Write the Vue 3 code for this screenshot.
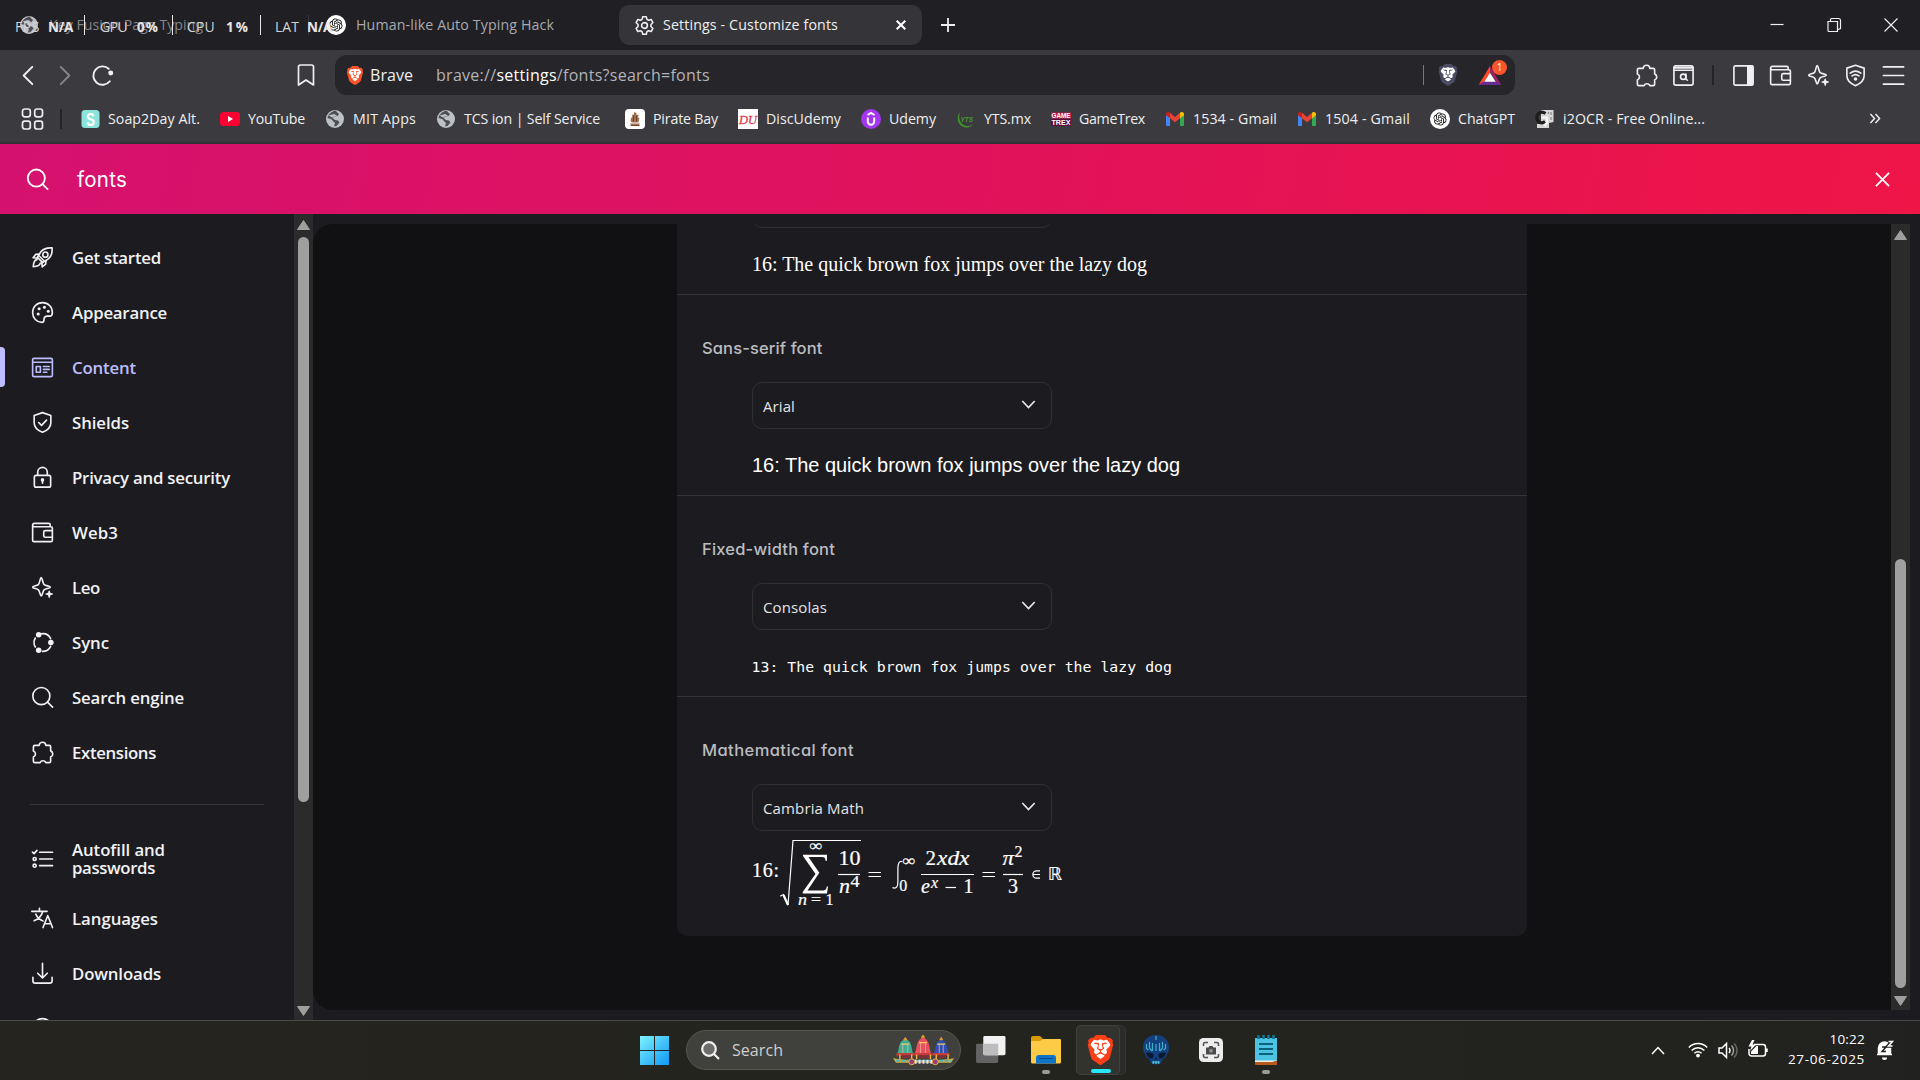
<script setup>
// Spreads a label's letters so that it fills the given width in pixels.
const vFit = {
  mounted(el, { value }) {
    const range = document.createRange()
    range.selectNodeContents(el)
    const width = range.getBoundingClientRect().width
    el.style.letterSpacing = `${(value - width) / el.textContent.trim().length}px`
  }
}

const shieldShape = 'M15.68 0l2.096 2.38s1.84-.512 2.709.358c.868.87 1.584 1.638 1.584 1.638l-.562 1.381.715 2.047s-2.104 7.98-2.35 8.955c-.486 1.919-.818 2.66-2.198 3.633-1.38.972-3.884 2.66-4.293 2.916-.409.256-.92.692-1.38.692-.46 0-.97-.436-1.38-.692a185.796 185.796 0 01-4.293-2.916c-1.38-.973-1.712-1.714-2.197-3.633-.247-.975-2.351-8.955-2.351-8.955l.715-2.047-.562-1.381s.716-.768 1.585-1.638c.868-.87 2.708-.358 2.708-.358L8.321 0h7.36z'
const lionFace = 'M12.001 14.936c-.14 0-1.038.317-1.758.69-.72.373-1.242.637-1.409.742-.167.104-.065.301.087.409.152.107 2.194 1.69 2.393 1.866.198.175.489.464.687.464.198 0 .49-.29.688-.464.198-.175 2.24-1.759 2.392-1.866.152-.108.254-.305.087-.41-.167-.104-.689-.368-1.41-.741-.72-.373-1.617-.69-1.757-.69zm0-11.278s-.409.001-1.022.206-1.278.46-1.584.46c-.307 0-2.581-.434-2.581-.434S4.119 7.152 4.119 7.849c0 .697.339.881.68 1.243l2.02 2.149c.192.203.59.511.356 1.066-.235.555-.58 1.26-.196 1.977.384.716 1.042 1.194 1.464 1.115.421-.08 1.412-.598 1.776-.834.364-.237 1.518-1.19 1.518-1.554 0-.365-1.193-1.02-1.413-1.168-.22-.15-1.226-.725-1.247-.95-.02-.227-.012-.293.284-.851.297-.559.831-1.304.742-1.8-.089-.495-.95-.753-1.565-.986-.615-.232-1.799-.671-1.947-.74-.148-.068-.11-.133.339-.175.448-.043 1.719-.212 2.292-.052.573.16 1.552.403 1.632.532.079.13.149.134.067.579-.081.445-.5 2.581-.541 2.96-.04.38-.12.63.288.724.409.094 1.097.256 1.333.256s.924-.162 1.333-.256c.408-.093.329-.344.288-.723-.04-.38-.46-2.516-.541-2.961-.082-.445-.012-.45.067-.579.08-.129 1.059-.372 1.632-.532.573-.16 1.845.009 2.292.052.449.042.487.107.339.175-.148.069-1.332.508-1.947.74-.615.233-1.476.49-1.565.986-.09.496.445 1.241.742 1.8.297.558.304.624.284.85-.02.226-1.026.802-1.247.95-.22.15-1.413.804-1.413 1.169 0 .364 1.154 1.317 1.518 1.554.364.236 1.355.755 1.776.834.422.079 1.08-.4 1.464-1.115.384-.716.039-1.422-.195-1.977-.235-.555.163-.863.355-1.066l2.02-2.149c.341-.362.68-.546.68-1.243 0-.697-2.695-3.96-2.695-3.96s-2.274.436-2.58.436c-.307 0-.972-.256-1.585-.461-.613-.205-1.022-.206-1.022-.206z'
const knot = 'M22.2819 9.8211a5.9847 5.9847 0 0 0-.5157-4.9108 6.0462 6.0462 0 0 0-6.5098-2.9A6.0651 6.0651 0 0 0 4.9807 4.1818a5.9847 5.9847 0 0 0-3.9977 2.9 6.0462 6.0462 0 0 0 .7427 7.0966 5.98 5.98 0 0 0 .511 4.9107 6.051 6.051 0 0 0 6.5146 2.9001A5.9847 5.9847 0 0 0 13.2599 24a6.0557 6.0557 0 0 0 5.7718-4.2058 5.9894 5.9894 0 0 0 3.9977-2.9001 6.0557 6.0557 0 0 0-.7475-7.0729zm-9.022 12.6081a4.4755 4.4755 0 0 1-2.8764-1.0408l.1419-.0804 4.7783-2.7582a.7948.7948 0 0 0 .3927-.6813v-6.7369l2.02 1.1686a.071.071 0 0 1 .038.052v5.5826a4.504 4.504 0 0 1-4.4945 4.4944zm-9.6607-4.1254a4.4708 4.4708 0 0 1-.5346-3.0137l.142.0852 4.783 2.7582a.7712.7712 0 0 0 .7806 0l5.8428-3.3685v2.3324a.0804.0804 0 0 1-.0332.0615L9.74 19.9502a4.4992 4.4992 0 0 1-6.1408-1.6464zM2.3408 7.8956a4.485 4.485 0 0 1 2.3655-1.9728V11.6a.7664.7664 0 0 0 .3879.6765l5.8144 3.3543-2.0201 1.1685a.0757.0757 0 0 1-.071 0l-4.8303-2.7865A4.504 4.504 0 0 1 2.3408 7.872zm16.5963 3.8558L13.1038 8.364 15.1192 7.2a.0757.0757 0 0 1 .071 0l4.8303 2.7913a4.4944 4.4944 0 0 1-.6765 8.1042v-5.6772a.79.79 0 0 0-.407-.667zm2.0107-3.0231l-.142-.0852-4.7735-2.7818a.7759.7759 0 0 0-.7854 0L9.409 9.2297V6.8974a.0662.0662 0 0 1 .0284-.0615l4.8303-2.7866a4.4992 4.4992 0 0 1 6.6802 4.66zM8.3065 12.863l-2.02-1.1638a.0804.0804 0 0 1-.038-.0567V6.0742a4.4992 4.4992 0 0 1 7.3757-3.4537l-.142.0805L8.704 5.459a.7948.7948 0 0 0-.3927.6813zm1.0976-2.3654l2.602-1.4998 2.6069 1.4998v2.9994l-2.5974 1.4997-2.6067-1.4997Z'

// 24-unit outline icons
const line = {
  back: '<path d="M17 3 8 12l9 9" stroke-width="2"/>',
  forward: '<path d="m7 3 9 9-9 9" stroke-width="2"/>',
  reload: '<path d="M19.6 18A9.6 9.6 0 1 1 18.5 5" stroke-width="2"/><circle cx="20.6" cy="9.4" r="2.6" fill="currentColor" stroke="none"/>',
  bookmark: '<path d="M6.500 2h11a2 2 0 0 1 2 2v18L12 17l-7.500 5V4a2 2 0 0 1 2-2z"/>',
  grid: '<rect x="2" y="2" width="7.800" height="7.800" rx="2.300"/><rect x="14.200" y="2" width="7.800" height="7.800" rx="2.300"/><rect x="2" y="14.200" width="7.800" height="7.800" rx="2.300"/><rect x="14.200" y="14.200" width="7.800" height="7.800" rx="2.300"/>',
  rocket: '<path d="M22 2c-5-.4-9 .9-11.600 3.900L6.600 11.700l5.700 5.700 5.800-3.900C21.200 11 22.400 7 22 2z"/><circle cx="15" cy="9" r="2.700"/><path d="M9 8.300 5 8.700 2.200 12.300l4.700.3M15.700 15l-.4 4-3.600 2.800-.4-4.700M6.200 14.200C3.800 14.400 2.600 17 2.300 21.700c4.500-.3 7.100-1.500 7.500-4"/><path d="m8.300 10.200 5.500 5.500"/>',
  palette: '<path d="M12 1.700C6 1.700 1.700 6.200 1.700 12S6 22.300 11.200 22.300c1.700 0 2.300-1 2.300-2.500 0-3 1-4 3.600-4h2.500c1.700 0 2.700-1.600 2.700-3.800C22.300 6.200 18 1.700 12 1.700z"/><g fill="currentColor" stroke="none"><circle cx="8.500" cy="8" r="1.600"/><circle cx="14" cy="6.600" r="1.600"/><circle cx="18" cy="10.600" r="1.600"/><circle cx="7.500" cy="13.600" r="1.600"/></g>',
  content: '<rect x="1.700" y="2.500" width="20.600" height="19" rx="1.500"/><path d="M2 6.500h20M5.500 11h4.300v6H5.500zM13 11h6M13 14h6M13 17h3.500"/>',
  shield: '<path d="m12 1.700 8.700 3v7.500c0 5-3.600 8-8.700 10.100-5.100-2.100-8.700-5.100-8.700-10.100V4.700z" /><path d="m8 12 3 3 5.200-5.500"/>',
  lock: '<rect x="3.500" y="9.800" width="17" height="12.300" rx="1.800"/><path d="M7 9.700V6.500a5 5 0 0 1 10 0v3.200M12 14.500V18"/><circle cx="12" cy="14.500" r="1" />',
  wallet: '<path d="M20 6V4a1.500 1.500 0 0 0-1.500-1.500H3.500A1.700 1.700 0 0 0 1.700 4.200V20a1.500 1.500 0 0 0 1.500 1.500h17.600a1.500 1.500 0 0 0 1.500-1.500V7.500A1.500 1.500 0 0 0 20.800 6H3.500a1.600 1.600 0 0 1-1.700-1.600"/><path d="M22.300 10h-7.500a1.500 1.500 0 0 0-1.500 1.500v4a1.500 1.500 0 0 0 1.500 1.500h7.500"/>',
  leo: '<path d="M10.700 1.700c1.200 0 1.400 6 3 7.200 1.600 1.300 6.500 1.700 6.500 2.800s-5 1.400-6.500 2.700c-1.500 1.300-1.800 6.500-3 6.500s-1.500-5.200-3-6.500c-1.500-1.300-6-1.500-6-2.700S6.200 10.200 7.700 8.900c1.500-1.200 1.800-7.200 3-7.200z"/><path d="M19 15c.9 0 .9 2.200 1.300 2.600.5.500 2.700.5 2.700 1.300s-2.200.8-2.700 1.200c-.4.500-.4 2.900-1.300 2.900s-.9-2.400-1.300-2.900c-.5-.4-2.700-.4-2.700-1.200s2.200-.8 2.700-1.300c.4-.4.4-2.600 1.300-2.600z" fill="currentColor" stroke="none"/>',
  sync: '<path d="M4.500 7.300a9.300 9.300 0 0 0 0 9.400M10.500 3a9.300 9.300 0 0 1 10 5M20.500 16a9.300 9.300 0 0 1-8.500 5.300"/><g fill="currentColor" stroke="none"><circle cx="8" cy="4" r="2.900"/><circle cx="8" cy="20" r="2.900"/><circle cx="20.700" cy="12" r="2.900"/></g>',
  search: '<circle cx="10.800" cy="10.500" r="8.900"/><path d="m17.200 16.900 5.300 5.100"/>',
  puzzle: '<path d="M4 4.500h4.600a3.400 3.200 0 0 1 6.800 0H19a1.500 1.500 0 0 1 1.500 1.500v4.300a3.500 3.500 0 0 1 0 6.500v4.200a1.500 1.500 0 0 1-1.500 1.500h-3.500a3.300 3.300 0 0 0-6 0H4A1.500 1.500 0 0 1 2.500 21v-4.300a3.300 3.300 0 0 0 0-6.200V6A1.500 1.500 0 0 1 4 4.500z"/>',
  list: '<path d="M9 5.500h13.500M9 12.500h13.500M9 19.500h13.500" /><path d="m1.500 5.300 1.700 1.600 3-3.400"/><circle cx="3.800" cy="12.500" r="1.600"/><circle cx="3.800" cy="19.500" r="1.600"/>',
  languages: '<path d="M.8 4.500h16M8.800 1.500v3M12.300 4.800c-1.500 5-4.500 8-9 9.500M5 7.500c1.500 3.500 4 5.800 7.500 7"/><path d="m12.500 21.500 5-12.500 5 12.500M14.200 17.500h6.600" stroke-width="1.600"/>',
  download: '<path d="M12 1.500v15M7 11.700l5 5 5-5M2 16v3.500A2.500 2.500 0 0 0 4.500 22h15a2.500 2.500 0 0 0 2.500-2.500V16"/>',
  circle: '<circle cx="12" cy="12" r="10.300"/>',
  pageSearch: '<rect x="2" y="2" width="20" height="20" rx="2"/><path d="M2 6.500h20M2 4h20"/><circle cx="11.700" cy="13.300" r="2.800"/><path d="m14.500 10.500v5.500l1.500.8"/>',
  panel: '<rect x="2" y="2" width="20" height="20" rx="1.500"/><path d="M16.500 2.500h5v19h-5z" fill="currentColor"/>',
  vpn: '<path d="m12 1.300 9 3v8c0 4.700-3.400 8-9 10.400-5.600-2.400-9-5.700-9-10.400v-8z"/><path d="M6.500 9.600c3.300-2.600 7.700-2.600 11 0M8.400 12.500c2.200-1.700 5-1.700 7.200 0"/><circle cx="12" cy="15.600" r="1.900" fill="currentColor" stroke="none"/>',
  menu: '<path d="M1.500 3h21M1.500 12h21M1.500 21h21" stroke-width="1.800"/>',
  gear: '<path d="M10 2h4l.8 3 1.800 1 3-.9 2 3.500-2.200 2.200v2.400l2.200 2.200-2 3.500-3-.9-1.800 1-.8 3h-4l-.8-3-1.800-1-3 .9-2-3.500 2.200-2.200v-2.400L2.400 8.600l2-3.500 3 .9 1.800-1z"/><circle cx="12" cy="12" r="3.300"/>'
}

const globe = '<circle cx="10" cy="10" r="9" fill="#bdc1c6"/><path d="M10.500 1.500C6 3 3 5.500 2.500 9l4 1.200 1.800 2.300 1.700 1.500-1 3.500 2.500-.5 3-3.500-1.500-2-3-.6-2.500-1.900 2-1.500 3-.5 1.500-2-1.700-1.500z" fill="#3b3b3f" opacity=".85"/><path d="M3.500 6.500 9 5l3 1.500L7 8.500z" fill="#bdc1c6"/>'
const gmail = '<path d="M1 5v11.200c0 .5.400.8.900.8H5V8z" fill="#4285f4"/><path d="M19 5v11.200c0 .5-.4.800-.9.800H15V8z" fill="#34a853"/><path d="M5 3.800 10 8l5-4.200v5.500L10 13.300 5 9.300z" fill="#ea4335"/><path d="M1 5c0-2 2.200-2.500 3.500-1.600L5 3.800v5.500L1 6.300z" fill="#c5221f"/><path d="M19 5c0-2-2.200-2.500-3.500-1.600l-.5.4v5.500l4-3z" fill="#fbbc04"/>'
const chatgpt = `<circle cx="10" cy="10" r="10" fill="#fff"/><path transform="translate(3.400 3.400) scale(.55)" d="${knot}" fill="#111"/>`

const bookmarks = [
  { text: 'Soap2Day Alt.', w: 92, icon: '<rect x="1.500" y="1" width="18" height="18" rx="3.500" fill="#8be3dc"/><text x="10.500" y="16.500" text-anchor="middle" font-family="Liberation Sans" font-weight="700" font-size="18" fill="#fff" textLength="9" lengthAdjust="spacingAndGlyphs">S</text>' },
  { text: 'YouTube', w: 57, icon: '<rect y="3" width="20" height="14" rx="3.500" fill="#ff0033"/><path d="M8 7v6l5-3z" fill="#fff"/>' },
  { text: 'MIT Apps', w: 63, icon: globe },
  { text: 'TCS ion | Self Service', w: 136, box: 141, icon: globe },
  { text: 'Pirate Bay', w: 65, icon: '<rect width="20" height="20" rx="4" fill="#fff"/><path d="M5 14.500h10L13.500 17h-7zM6 9l1.200-.8V5.500l1.800.3V3l2.500 1V6l2-.3-.4 2.800 1.300.8-.9 4.200H6.800L5.500 12z" fill="#a07050"/><path d="M8.500 6.500v6M11.500 6.500v6M5.500 16.500h9" stroke="#5f3a26" stroke-width=".8"/>' },
  { text: 'DiscUdemy', w: 75, icon: '<rect width="20" height="20" fill="#fff"/><text x="1" y="14.500" font-family="Liberation Serif" font-style="italic" font-size="13" fill="#e2384a" stroke="#e2384a" stroke-width=".3" textLength="18" lengthAdjust="spacingAndGlyphs">DU</text>' },
  { text: 'Udemy', w: 47, icon: '<circle cx="10" cy="10" r="10" fill="#a435f0"/><path d="m6.500 6 3.500-2 3.500 2M6.800 8.500v4a3.200 3.200 0 0 0 6.400 0v-4" fill="none" stroke="#fff" stroke-width="2"/>' },
  { text: 'YTS.mx', w: 47, icon: '<path d="M4 3C0 7.500 1 17 9 18.500c3 .4 6-.5 8-3-5 3-11 1.500-13-4C3 8.500 3 6 4 3z" fill="#3f8f2a"/><text x="4.500" y="12.500" font-family="Liberation Sans" font-style="italic" font-weight="700" font-size="8" fill="#4a9a30" textLength="12.500" lengthAdjust="spacingAndGlyphs">YTS</text>' },
  { text: 'GameTrex', w: 66, icon: '<rect y="3.500" width="20" height="6" fill="#c41444"/><rect y="10" width="20" height="7" fill="#5b0c3c"/><text x=".5" y="9.200" font-family="Liberation Sans" font-weight="700" font-size="7.500" fill="#fff" textLength="19" lengthAdjust="spacingAndGlyphs">GAME</text><text x=".5" y="16.300" font-family="Liberation Sans" font-weight="700" font-size="8" fill="#fff" textLength="19" lengthAdjust="spacingAndGlyphs">TREX</text>' },
  { text: '1534 - Gmail', w: 84, icon: gmail },
  { text: '1504 - Gmail', w: 85, icon: gmail },
  { text: 'ChatGPT', w: 57, icon: chatgpt },
  { text: 'i2OCR - Free Online...', w: 142, icon: '<path d="M6 1h12.500v12L14 14v5H2v-4h4z" fill="#d6d6d6"/><path d="M13.500 3v2M16 3v3M16 8v3" stroke="#888" stroke-width="1.200"/><path d="M10.500 4.500C6 1.500 1.800 4.500 1.800 8.500s4.200 7 8.200 4" fill="none" stroke="#1d1d1d" stroke-width="3.200"/><path d="M6.500 8.500H12V14L9.500 17" fill="none" stroke="#f6f6f6" stroke-width="2.200"/>' }
]

const nav = [
  { text: 'Get started', w: 89, icon: 'rocket' },
  { text: 'Appearance', w: 95, icon: 'palette' },
  { text: 'Content', w: 64, icon: 'content', active: true },
  { text: 'Shields', w: 57, icon: 'shield' },
  { text: 'Privacy and security', w: 158, icon: 'lock' },
  { text: 'Web3', w: 46, icon: 'wallet' },
  { text: 'Leo', w: 28, icon: 'leo' },
  { text: 'Sync', w: 37, icon: 'sync' },
  { text: 'Search engine', w: 112, icon: 'search' },
  { text: 'Extensions', w: 84, icon: 'puzzle' }
]
const navMore = [
  { text: 'Languages', w: 86, icon: 'languages' },
  { text: 'Downloads', w: 89, icon: 'download' }
]

const sections = [
  { label: 'Sans-serif font', lw: 120.5, value: 'Arial', vw: 32, sample: '16: The quick brown fox jumps over the lazy dog', sw: 428, kind: 'sans' },
  { label: 'Fixed-width font', lw: 133, value: 'Consolas', vw: 64, sample: '13: The quick brown fox jumps over the lazy dog', sw: 420.5, kind: 'mono' },
  { label: 'Mathematical font', lw: 152, value: 'Cambria Math', vw: 101, kind: 'math' }
]
const tools = ['panel', 'wallet', 'leo', 'vpn', 'menu']
</script>

<template>
  <div class="window">
    <header class="tabs">
      <div class="tab first">
        <svg class="i20" viewBox="0 0 20 20" v-html="globe"></svg>
        <span v-fit="154">Key Fusion Page Typing</span>
      </div>
      <div class="tab second">
        <svg class="i20" viewBox="0 0 20 20" v-html="chatgpt"></svg>
        <span v-fit="198">Human-like Auto Typing Hack</span>
      </div>
      <div class="tab current">
        <svg class="line gear" viewBox="0 0 24 24" v-html="line.gear"></svg>
        <span v-fit="175">Settings - Customize fonts</span>
        <svg class="tab-x" viewBox="0 0 10 10"><path d="m.7.7 8.600 8.600M9.300.7.7 9.300" /></svg>
      </div>
      <svg class="plus" viewBox="0 0 14 14"><path d="M7 0v14M0 7h14" /></svg>
      <div class="win-controls">
        <svg viewBox="0 0 14 14"><path d="M.5 6.500h13" /></svg>
        <svg viewBox="0 0 14 14"><path d="M1 3.500h9.500v10H2A1 1 0 0 1 1 12.500zM3.500 3V1.500A1 1 0 0 1 4.500.5h7a2 2 0 0 1 2 2v8l-2.500 1" /></svg>
        <svg viewBox="0 0 14 14"><path d="m.5.5 13 13M13.500.5l-13 13" /></svg>
      </div>
      <div class="stats">
        <span class="s1" v-fit="25">FPS</span><b class="s2" v-fit="25">N/A</b>
        <i class="bar b1"></i>
        <span class="s3" v-fit="27">GPU</span><b class="s4" v-fit="22">0%</b>
        <i class="bar b2"></i>
        <span class="s5" v-fit="28">CPU</span><b class="s6" v-fit="21">1 %</b>
        <i class="bar b3"></i>
        <span class="s7" v-fit="24">LAT</span><b class="s8" v-fit="25">N/A</b>
      </div>
    </header>

    <div class="toolbar">
      <svg class="line t-back" viewBox="0 0 24 24" v-html="line.back"></svg>
      <svg class="line t-forward" viewBox="0 0 24 24" v-html="line.forward"></svg>
      <svg class="line t-reload" viewBox="0 0 24 24" v-html="line.reload"></svg>
      <svg class="line t-mark" viewBox="0 0 24 24" v-html="line.bookmark"></svg>
      <div class="url">
        <svg class="brave-s" viewBox="0 0 24 24"><path :d="shieldShape" fill="#fb542b" /><path :d="lionFace" fill="#fff" /></svg>
        <span class="brand" v-fit="43">Brave</span>
        <span class="address" v-fit="274">brave://<em>settings</em>/fonts?search=fonts</span>
        <i class="url-sep"></i>
        <svg class="lion" viewBox="0 0 24 24"><path :d="shieldShape" fill="#4b4c63" /><path :d="lionFace" fill="#fff" /></svg>
        <div class="bat">
          <svg viewBox="0 0 24 20"><path d="M12 0 0 20l12-7z" fill="#ff4724" /><path d="M12 0v6l7 12 5 2z" fill="#9e1f63" /><path d="M0 20h24l-6-4H6z" fill="#662d91" /><path d="m12 7-6 9.500h12z" fill="#fff" /></svg>
          <span>1</span>
        </div>
      </div>
      <div class="tools">
        <svg class="line" viewBox="0 0 24 24" v-html="line.puzzle"></svg>
        <svg class="line" viewBox="0 0 24 24" v-html="line.pageSearch"></svg>
        <i></i>
        <svg v-for="t in tools" :key="t" class="line" viewBox="0 0 24 24" v-html="line[t]"></svg>
      </div>
    </div>

    <div class="bookmarks">
      <svg class="line apps" viewBox="0 0 24 24" v-html="line.grid"></svg>
      <i class="bm-sep"></i>
      <div v-for="b in bookmarks" :key="b.text" class="bm">
        <svg class="i20" viewBox="0 0 20 20" v-html="b.icon"></svg>
        <div :style="{ width: (b.box || b.w) + 'px' }"><span v-fit="b.w">{{ b.text }}</span></div>
      </div>
      <svg class="more" viewBox="0 0 12 12"><path d="m1 1 4.500 5L1 11M6.500 1 11 6l-4.500 5" /></svg>
    </div>

    <div class="find">
      <svg class="line" viewBox="0 0 24 24" v-html="line.search"></svg>
      <span v-fit="50">fonts</span>
      <svg class="clear" viewBox="0 0 16 16"><path d="m1 1 14 14M15 1 1 15" /></svg>
    </div>

    <div class="body">
      <nav>
        <div v-for="n in nav" :key="n.text" class="item" :class="{ active: n.active }">
          <svg class="line" viewBox="0 0 24 24" v-html="line[n.icon]"></svg>
          <span v-fit="n.w">{{ n.text }}</span>
        </div>
        <hr />
        <div class="item tall">
          <svg class="line" viewBox="0 0 24 24" v-html="line.list"></svg>
          <div class="two"><span v-fit="93">Autofill and</span><span v-fit="83">passwords</span></div>
        </div>
        <div v-for="n in navMore" :key="n.text" class="item">
          <svg class="line" viewBox="0 0 24 24" v-html="line[n.icon]"></svg>
          <span v-fit="n.w">{{ n.text }}</span>
        </div>
        <div class="item"><svg class="line" viewBox="0 0 24 24" v-html="line.circle"></svg></div>
      </nav>
      <div class="scroll left">
        <svg viewBox="0 0 13 10"><path d="M6.500.5 12.500 9.500H.5z" /></svg>
        <b></b>
        <svg class="down" viewBox="0 0 13 10"><path d="M6.500 9.500 12.500.5H.5z" /></svg>
      </div>
      <main>
        <div class="panel">
          <div class="card">
            <section class="clipped">
              <div class="select"></div>
              <p class="sample serif"><span v-fit="395">16: The quick brown fox jumps over the lazy dog</span></p>
            </section>
            <section v-for="s in sections" :key="s.label">
              <h3><span v-fit="s.lw">{{ s.label }}</span></h3>
              <div class="select">
                <span v-fit="s.vw">{{ s.value }}</span>
                <svg viewBox="0 0 14 9"><path d="m.8 1 6.200 6.500L13.200 1" /></svg>
              </div>
              <p v-if="s.sample" class="sample" :class="s.kind"><span v-fit="s.sw">{{ s.sample }}</span></p>
              <svg v-else class="formula" viewBox="0 0 320 72">
                <text x="0" y="36.700" textLength="27">16:</text>
                <path class="stroke" d="m28.300 56.300 3-1.800 4.700 10.500 5-64.500H109" />
                <path class="stroke heavy" d="m31.500 55 4.500 10" />
                <text x="57.500" y="10.500" class="sub" textLength="13" lengthAdjust="spacingAndGlyphs">∞</text>
                <path class="fill" d="M51 14.700h24v6h-1.400c-.5-2.800-1-3.700-3.600-3.700H56.500l10.800 15.800L55.500 50.500h15c3 0 3.700-1 4.300-4h1.200L75 53.500H50.700v-1.600l12.800-18L51 16z" />
                <text x="46" y="64.700" class="sub it" textLength="9" lengthAdjust="spacingAndGlyphs">n</text><text x="59" y="64.700" class="sub" textLength="10" lengthAdjust="spacingAndGlyphs">=</text><text x="73.500" y="64.700" class="sub">1</text>
                <text x="86.500" y="25" textLength="22" lengthAdjust="spacingAndGlyphs">10</text>
                <path class="stroke" d="M86 34.500h22" />
                <text x="87" y="53" class="it" textLength="11" lengthAdjust="spacingAndGlyphs">n</text><text x="98.500" y="47" class="sub" textLength="9" lengthAdjust="spacingAndGlyphs">4</text>
                <path class="stroke" d="M116.500 32.500h12.500M116.500 36.500h12.500" />
                <path class="stroke" d="M150.500 21.800c-3.300-1.500-4.600 1.700-4.600 6.500v13.500c0 5-1.500 7.300-5.400 5.800" />
                <text x="150.500" y="25.500" class="sub" textLength="13" lengthAdjust="spacingAndGlyphs">∞</text>
                <text x="147.200" y="51" class="sub">0</text>
                <text x="173.500" y="25" textLength="10.500" lengthAdjust="spacingAndGlyphs">2</text><text x="185" y="25" class="it" textLength="32.500" lengthAdjust="spacingAndGlyphs">xdx</text>
                <path class="stroke" d="M169 34.500h53" />
                <text x="169" y="53" class="it">e</text><text x="179" y="47.500" class="sub it">x</text>
                <path class="stroke" d="M193.500 47.500H204" />
                <text x="211.500" y="53">1</text>
                <path class="stroke" d="M230.500 32.500H243M230.500 36.500H243" />
                <text x="250.500" y="25" class="it" textLength="11.500" lengthAdjust="spacingAndGlyphs">π</text><text x="262.500" y="17.300" class="sub">2</text>
                <path class="stroke" d="M251 34.500h20" />
                <text x="256" y="53">3</text>
                <path class="stroke" d="M288 30.800h-3.500a3.700 3.700 0 0 0 0 7.400h3.500M281 34.500h7" />
                <text x="295.500" y="39.500" class="bb" textLength="14.500" lengthAdjust="spacingAndGlyphs">ℝ</text>
              </svg>
            </section>
          </div>
          <div class="scroll right">
            <svg viewBox="0 0 13 10"><path d="M6.500.5 12.500 9.500H.5z" /></svg>
            <b></b>
            <svg class="down" viewBox="0 0 13 10"><path d="M6.500 9.500 12.500.5H.5z" /></svg>
          </div>
        </div>
      </main>
    </div>

    <footer>
      <svg class="start" viewBox="0 0 29 29">
        <defs><linearGradient id="win" gradientUnits="userSpaceOnUse" x1="0" y1="0" x2="29" y2="29"><stop offset="0" stop-color="#7df3ff" /><stop offset="1" stop-color="#0f97f5" /></linearGradient></defs>
        <path fill="url(#win)" d="M0 0h14v14H0zM15 0h14v14H15zM0 15h14v14H0zM15 15h14v14H15z" />
      </svg>
      <div class="pill">
        <svg class="lens" viewBox="0 0 19 19"><circle cx="8" cy="8" r="6.800" fill="#6c6c6a" /><path d="m13 13 5 5" /></svg>
        <span v-fit="51">Search</span>
        <svg class="temples" viewBox="0 0 62 31">
          <path d="M4 19c2-2 1.500-8 3.500-11.500C9 5 10 5 12.500 4c2.500 1 3.500 1 5 3.500C19.500 11 19 17 21 19z" fill="#3fae93" /><path d="M21.500 19c2.500-3 2-9 4-12.500C27 4 28 3 30.500 2c2.500 1 3.500 2 5 4.500 2 3.500 1.500 9.500 4 12.500z" fill="#e8505b" /><path d="M41 19c2-2 1.500-8 3.500-11C46 5.500 47 5 49 4c2 1 3 1.500 4.500 4 2 3 1.500 9 3.500 11z" fill="#2f4fb5" />
          <path d="M11 5l1.500-2L14 5M29 2.500 30.500.5l1.500 2M47.700 5 49 3l1.300 2" stroke="#e0a030" stroke-width="1.600" fill="none" />
          <path d="M8.500 9h8M26.500 7.500h8M45 9h8" stroke="#f4cf62" stroke-width="1.300" /><path d="M10 9v9M15 9v9M28 8v10M33 8v10M47 9v9M51 9v9" stroke="#f5b0a0" stroke-width=".8" />
          <path d="M4 18h17l1 2.500H3zM21 18h19l1 2.500H20zM41 18h16l1 2.500H40z" fill="#c93a3a" />
          <path d="M7 19.500v5M19 19.500v5M24 19.500v5M38 19.500v5M44 19.500v5M56 19.500v5" stroke="#e7b445" stroke-width="1.500" /><path d="M9 22h9M26 22h11M46 22h8" stroke="#7d3038" stroke-width="3" />
          <path d="M0 23c8 3 54 3 62 0l-3 5H3z" fill="#d8a93e" /><path d="M3 26h56" stroke="#4bb8b8" stroke-width="2" stroke-dasharray="4 1.500" /><path d="M22 27h18" stroke="#e5e0ff" stroke-width="4" stroke-dasharray="2 2" />
          <g fill="#9a3c78" stroke="#e7b445"><circle cx="19" cy="27" r="3" /><circle cx="43" cy="27" r="3" /></g>
        </svg>
      </div>
      <svg class="taskview" viewBox="0 0 31 29"><rect y="8" width="23" height="20" rx="1.500" fill="#636363" /><rect x="7.500" width="23" height="20" rx="1.500" fill="#f2f2f2" /><path d="M7.500 8H23v12H9a1.500 1.500 0 0 1-1.500-1.500z" fill="#bdbdbd" /></svg>
      <div class="app folder">
        <svg viewBox="0 0 30 28"><path d="M0 2a2 2 0 0 1 2-2h7l3.500 3.500L9 7H0z" fill="#d99a06" /><path d="M0 5h9l3-2h17a1 1 0 0 1 1 1v22a1.500 1.500 0 0 1-1.500 1.500h-27A1.500 1.500 0 0 1 0 26z" fill="#fdcb46" /><path d="M5 27.500V22a3 3 0 0 1 3-3h14a3 3 0 0 1 3 3v5.500z" fill="#0f74c9" /><path d="M8 22.500h14" stroke="#074b87" /></svg>
        <i class="dot"></i>
      </div>
      <div class="stack">
        <div class="app brave">
          <svg viewBox="0 0 24 24"><path :d="shieldShape" fill="#fb3f16" /><path :d="lionFace" fill="#fff" /></svg>
          <i class="dot on"></i>
        </div>
      </div>
      <svg class="skull" viewBox="0 0 26 30">
        <path d="M13 0C5 0 0 5.500 0 12c0 4 1 6 2 7 .5 2 1 4 4 4.500l1.500 4c2 2.500 9 2.500 11 0l1.500-4c3-.5 3.500-2.500 4-4.500 1-1 2-3 2-7C26 5.500 21 0 13 0z" fill="#14407f" />
        <path d="M3 18c3-1 6-.5 8 2l-1.500 3.500C6 23.500 4 21.500 3 18zM23 18c-3-1-6-.5-8 2l1.500 3.500c3.500 0 5.500-2 6.500-5.500zM13 22l1.300 2.500h-2.600z" fill="#0b1830" />
        <path d="M3.500 9v4.500l2 1.500M6.500 7v6l2.500 3M9.500 8v8M13 1v4M13 9v7M16.500 8v8M19.500 7v6L17 16M22.500 9v4.500l-2 1.500M9.500 27h7" stroke="#3fb0c6" stroke-width="1.200" fill="none" /><path d="M9.500 27.500h7" stroke="#4cc0d4" stroke-width="2.500" stroke-dasharray="1.700 .9" />
      </svg>
      <svg class="snap" viewBox="0 0 24 24"><rect width="24" height="24" rx="4.500" fill="#ededed" /><path d="M4.500 8V6A1.500 1.500 0 0 1 6 4.500h3M15 4.500h3A1.500 1.500 0 0 1 19.500 6v2M19.500 16v2a1.500 1.500 0 0 1-1.500 1.500h-3M9 19.500H6A1.500 1.500 0 0 1 4.500 18v-2" stroke="#555" stroke-width="1.600" fill="none" /><path d="M7 9.500h2.500l1-1.500h3l1 1.500H17v7H7z" fill="#4a4a4a" /><circle cx="12" cy="12.800" r="2" fill="#8b8b8b" /></svg>
      <div class="app note">
        <svg viewBox="0 0 22 30"><path d="M0 3h22v23H0z" fill="#4cc3e3" /><path d="M0 26h22v4H1a1 1 0 0 1-1-1z" fill="#b85a1c" /><path d="M0 25.500h22l-5 1.500H0z" fill="#f2efe9" /><path d="M4 9h14M4 14h14M4 19h14" stroke="#0a6178" stroke-width="1.800" /><path d="M3.500 0v4M8.500 0v4M13.500 0v4M18.500 0v4" stroke="#0b7793" stroke-width="2.600" /></svg>
        <i class="dot"></i>
      </div>
      <div class="tray">
        <svg class="up" viewBox="0 0 14 9"><path d="m1 8 6-6.500L13 8" /></svg>
        <svg class="wifi" viewBox="0 0 20 16"><path d="M.8 5.500c5.300-5.300 13.100-5.300 18.400 0M3.600 8.500c3.700-3.700 9.100-3.700 12.800 0M6.400 11.300c2.100-2 5.100-2 7.200 0" /><circle cx="10" cy="13.600" r="1.900" /></svg>
        <svg class="vol" viewBox="0 0 20 17"><path d="M1 6h3l4.500-4.500v14L4 11H1z" /><path d="M11 6c1.300 1.300 1.300 3.700 0 5" /><path d="M13.500 3.500c2.700 2.700 2.700 7.300 0 10" opacity=".55" /><path d="M16 1.500c4 3.700 4 10.300 0 14" opacity=".3" /></svg>
        <svg class="batt" viewBox="0 0 20 17"><path d="M6 4.500h9A2.500 2.500 0 0 1 17.500 7v6.500A2.500 2.500 0 0 1 15 16H3.500A2.500 2.500 0 0 1 1 13.500V9" /><path d="M18.500 8.500v3.500" stroke-width="2.500" /><path d="M3 14V11.500L8.500 6H10v8z" fill="#fff" stroke="none" /><path d="M4 0 .5 6.500h3L2 11l6-6.500H4.500L6.500 0z" fill="#fff" stroke="none" /></svg>
        <div class="clock"><span v-fit="35.5">10:22</span><span v-fit="77">27-06-2025</span></div>
        <svg class="bell" viewBox="0 0 18 20"><path d="M1 14.500h15M2.500 14V8a6 6 0 0 1 12 0v6z" fill="#fff" stroke="#fff" stroke-width="1.500" /><path d="M6 17.500h5a2.500 2.500 0 0 1-5 0z" fill="#fff" /><path d="M6 7h4l-4 4.500h4" stroke="#222" stroke-width="1.500" fill="none" /><path d="M12 1h4.500L12 6h4.500" stroke="#222" stroke-width="3.500" fill="none" /><path d="M12.500 1.500h4L12.500 6h4" stroke="#fff" stroke-width="1.500" fill="none" /></svg>
      </div>
    </footer>
  </div>
</template>

<style>
body { background: #1c1c20; overflow: hidden; }
</style>

<style scoped>
* { box-sizing: border-box; }
.window { width: 1920px; height: 1080px; display: flex; flex-direction: column; overflow: hidden; color: #ececee; font-family: "Open Sans", "Noto Sans", sans-serif; background: #1c1c20; }
svg { display: block; flex: none; overflow: visible; }
span, b { white-space: nowrap; display: inline-block; }
.line { width: 24px; height: 24px; fill: none; stroke: currentColor; stroke-width: 1.700; stroke-linecap: round; stroke-linejoin: round; }
.i20 { width: 20px; height: 20px; }

.tabs { position: relative; height: 50px; flex: none; display: flex; align-items: center; background: #1f1f24; font-size: 14.200px; }
.tab { display: flex; align-items: center; height: 40px; }
.tab span { margin-top: -2px; }
.first { width: 309px; height: 20px; padding-left: 19px; gap: 10px; color: #85858a; border-right: 1px solid #3a3a3f; }
.second { width: 310px; padding-left: 17px; gap: 10px; color: #a9a9ad; }
.current { width: 303px; padding-left: 15px; background: #353539; border-radius: 10px; color: #efeff1; }
.gear { width: 21px; height: 21px; stroke-width: 1.800; margin-right: 8px; }
.current span { width: 175px; }
.tab-x { width: 10px; height: 10px; margin-left: 58px; fill: none; stroke: #fff; stroke-width: 2; }
.plus { width: 14px; height: 14px; margin-left: 19px; fill: none; stroke: #eee; stroke-width: 1.800; }
.win-controls { margin: -1px 22px 0 auto; display: flex; gap: 43px; }
.win-controls svg { width: 14px; height: 14px; fill: none; stroke: #f0f0f0; stroke-width: 1.200; }
.stats { position: absolute; left: 0; top: 0; height: 50px; color: #d3d3d5; font-size: 14px; line-height: 20px; }
.stats span, .stats b, .bar { position: absolute; top: 17px; }
.stats span { font-weight: 500; }
.stats b { font-weight: 700; color: #e6e6e6; font-size: 13.500px; }
.stats .bar { width: 1px; height: 20px; top: 15px; background: #e8e8e8; }
.s1 { left: 15px; } .s2 { left: 48px; } .b1 { left: 84px; } .s3 { left: 100px; } .s4 { left: 137px; } .b2 { left: 172px; }
.s5 { left: 187px; } .s6 { left: 226px; } .b3 { left: 260px; } .s7 { left: 275px; } .s8 { left: 307px; }

.toolbar { height: 45px; flex: none; padding-top: 5px; display: flex; align-items: center; background: #3b3b3f; color: #f0f0f2; }
.t-back { margin-left: 16px; width: 23px; height: 23px; }
.t-forward { margin-left: 15px; width: 23px; height: 23px; color: #85858a; }
.t-reload { margin-left: 14px; width: 23px; height: 23px; }
.t-mark { margin-left: 180px; }
.url { width: 1180px; height: 40px; margin-left: 17px; display: flex; align-items: center; background: #25252a; border-radius: 12px; }
.brave-s { width: 20px; height: 19px; margin-left: 10px; }
.brand { margin-left: 5px; width: 43px; font-size: 16px; margin-top: -1px; }
.address { margin: -1px 0 0 23px; width: 274px; font-size: 16px; color: #b4b4b8; }
.address em { font-style: normal; color: #fff; }
.url-sep { width: 1px; height: 20px; background: #77777c; margin-left: 713px; }
.lion { width: 22px; height: 22px; margin-left: 13px; }
.bat { position: relative; margin-left: 19px; }
.bat svg { width: 24px; height: 19px; }
.bat span { position: absolute; left: 14px; top: -6px; width: 15px; height: 15px; border-radius: 8px; background: #fb542b; color: #fff; font-size: 10px; line-height: 15px; text-align: center; }
.tools { margin-left: 120px; display: flex; align-items: center; }
.tools .line { width: 23px; height: 23px; margin-right: 14.500px; }
.tools .line:first-child { margin-right: 13.500px; }
.tools i { width: 2px; height: 20px; margin: 0 18px 0 2.500px; background: #242428; }

.bookmarks { height: 49px; flex: none; display: flex; align-items: center; background: #3b3b3f; border-bottom: 2px solid #323236; font-size: 14.200px; color: #eeeef0; }
.apps { margin-left: 20px; width: 25px; height: 24px; }
.bm-sep { width: 2px; height: 20px; margin: 0 18px 0 15px; background: #242428; }
.bm { display: flex; align-items: center; gap: 8px; margin-right: 20px; }
.more { width: 12px; height: 11px; margin-left: 144px; fill: none; stroke: #eee; stroke-width: 1.600; }

.find { height: 70px; flex: none; display: flex; align-items: center; padding-left: 26px; background: linear-gradient(100deg, #d5116f 0%, #e21259 55%, #ef1547 100%); color: #fff; font: 20.500px "Inter", sans-serif; }
.find .line { width: 23px; height: 23px; stroke-width: 1.900; }
.find span { margin-left: 28px; width: 49px; }
.clear { width: 15px; height: 15px; margin: 0 30px 0 auto; fill: none; stroke: #fff; stroke-width: 1.900; }

.body { height: 806px; flex: none; display: flex; }
nav { width: 294px; height: 806px; padding-top: 16px; overflow: hidden; color: #f2f2f4; font-size: 16.800px; font-weight: 600; }
.item { height: 55px; padding-left: 31px; display: flex; align-items: center; gap: 18px; }
.item span { margin-top: -1px; }
.item .line { width: 23px; height: 23px; margin-top: -1px; }
.active { color: #bcbcff; position: relative; }
.active::before { content: ""; position: absolute; left: 0; top: 7px; width: 5px; height: 40px; background: #bdbdff; border-radius: 0 4px 4px 0; }
hr { margin: 24px 0 0 30px; width: 234px; border: 0; height: 1px; background: #35353b; }
.tall { margin: 25px 0 4px; height: 57px; }
.two { display: flex; flex-direction: column; align-items: flex-start; line-height: 19px; }
.scroll { width: 19px; flex: none; display: flex; flex-direction: column; align-items: center; background: #2b2b2b; padding: 6px 0 4px; }
.scroll svg { width: 13px; height: 10px; fill: #9f9f9f; stroke: #9f9f9f; stroke-linejoin: round; }
.scroll b { width: 11px; border-radius: 6px; background: #9f9f9f; }
.left b { margin-top: 7px; height: 565px; }
.scroll .down { margin-top: auto; }
.right b { margin-top: 319px; height: 429px; }

main { flex: 1; padding: 10px 10px 10px 0; }
.panel { height: 786px; display: flex; justify-content: space-between; overflow: hidden; background: #111113; border-radius: 20px 0 0 20px; }
.card { width: 850px; height: 712px; margin-left: 364px; background: #1c1c20; border-radius: 0 0 10px 10px; overflow: hidden; }
section { display: flow-root; height: 201px; border-bottom: 1px solid #34343a; }
section:last-child { height: 239px; border: 0; }
.clipped { height: 71px; }
.clipped .select { margin-top: -43px; }
h3 { margin: 0; height: 87px; padding: 41px 0 0 25px; font: 500 16.500px/24px "Inter", sans-serif; font-feature-settings: "cv11"; color: #bcbcc0; }
.select { width: 300px; height: 47px; margin-left: 75px; padding: 0 15px 0 10px; border: 1px solid #2f2f35; border-radius: 10px; display: flex; align-items: center; justify-content: space-between; font-size: 15px; color: #e4e4e6; }
.select svg { width: 15px; height: 9px; margin-top: -2px; fill: none; stroke: #e8e8ea; stroke-width: 1.700; }
.sample { margin: 21px 0 0 75px; font-size: 20px; line-height: 30px; color: #fff; }
.serif { font-family: "Liberation Serif", serif; }
.sans { font-family: "Liberation Sans", sans-serif; }
.mono { font-family: "DejaVu Sans Mono", monospace; font-size: 14.800px; margin: 22px 0 0 74.500px; }
.formula { width: 320px; height: 72px; margin: 9px 0 0 75px; font: 20px "Liberation Serif", serif; fill: #fff; }
.formula text { stroke: #fff; stroke-width: .2; }
.formula .sub { font-size: 16px; }
.formula .it { font-style: italic; }
.formula .bb { font: 18px "DejaVu Sans", sans-serif; }
.stroke { fill: none; stroke: #fff; stroke-width: 1.200; }
.heavy { stroke-width: 2.200; }

footer { height: 60px; flex: none; display: flex; align-items: center; padding-bottom: 1px; background: linear-gradient(90deg, #25241f, #24241f 60%, #21211f); border-top: 1px solid #4a4a49; }
.start { width: 29px; height: 29px; margin-left: 640px; }
.pill { width: 275px; height: 40px; margin-left: 17px; padding-left: 14px; display: flex; align-items: center; border-radius: 20px; background: #40403d; border: 1px solid #555552; font-size: 16px; color: #cfcfcf; }
.lens { width: 19px; height: 19px; fill: none; stroke: #f0f0f0; stroke-width: 2.200; }
.pill span { margin-left: 12px; width: 51px; }
.temples { width: 61px; height: 31px; margin-left: 110px; }
.taskview { width: 30px; height: 28px; margin-left: 15px; }
.app { position: relative; height: 50px; display: flex; align-items: center; justify-content: center; }
.dot { position: absolute; bottom: 1px; left: 50%; width: 8px; height: 4px; margin-left: -4px; border-radius: 2px; background: #9b9b9a; }
.dot.on { width: 20px; margin-left: -7px; background: #27e7f8; }
.folder { margin-left: 25px; width: 30px; }
.folder svg { width: 30px; height: 28px; }
.stack { width: 50px; height: 50px; margin-left: 15px; border-radius: 5px; background: #2b2b29; border: 1px solid #353533; display: flex; align-items: center; }
.brave { width: 44px; margin-left: -1px; border-radius: 5px; background: #32322f; border: 1px solid #41413e; padding-left: 5px; }
.brave svg { width: 31px; height: 30px; }
.skull { width: 26px; height: 30px; margin-left: 17px; }
.snap { width: 24px; height: 24px; margin-left: 30px; }
.note { margin-left: 32px; width: 22px; }
.note svg { width: 22px; height: 30px; }
.tray { margin: 0 26px 0 auto; display: flex; align-items: center; }
.tray svg { fill: none; stroke: #fff; stroke-width: 1.500; }
.up { width: 14px; height: 9px; margin-right: 23px; }
.wifi { width: 20px; height: 16px; margin-right: 10px; }
.wifi circle { fill: #fff; stroke: none; }
.vol { width: 20px; height: 17px; margin-right: 10px; }
.batt { width: 20px; height: 17px; margin: -3px 19px 0 0; }
.clock { width: 78px; margin-top: -2px; display: flex; flex-direction: column; align-items: flex-end; font-size: 13.500px; line-height: 20px; color: #fff; }
.tray .bell { width: 18px; height: 20px; margin-left: 11px; stroke: none; }
</style>
